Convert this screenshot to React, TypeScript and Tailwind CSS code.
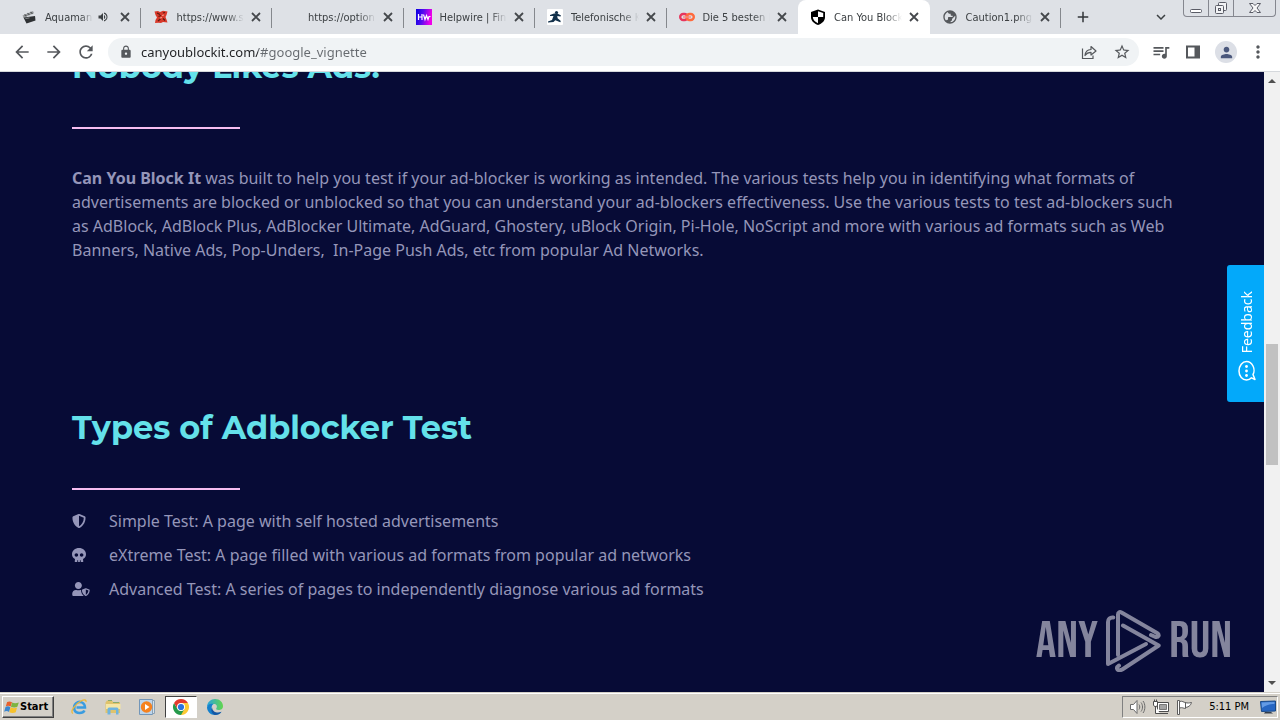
import type { ReactNode } from "react";
import {
  MdArrowBack,
  MdArrowForward,
  MdRefresh,
  MdLock,
  MdStarBorder,
  MdQueueMusic,
  MdPerson,
  MdMoreVert,
  MdAdd,
  MdExpandMore,
  MdPublic,
  MdVolumeUp,
} from "react-icons/md";
import { FaShieldAlt, FaSkull, FaUserShield } from "react-icons/fa";

const ClapperIcon = () => (
  <svg viewBox="0 0 16 16" className="size-4">
    <path d="M1.500 6.500 12 2l1 2.200L2.500 8.700z" fill="#9a9d9f" />
    <path d="m3.500 5.500 2 1.700M6.500 4.200l2 1.700M9.500 3l2 1.700" stroke="#55585a" strokeWidth="1.200" />
    <path d="m2.500 8.400 11.500-1.400.5 4.600-9 3z" fill="#2e3133" />
    <path d="m4.500 9.500 4-.6" stroke="#898c8e" />
  </svg>
);

const RedIcon = () => (
  <svg viewBox="0 0 16 16" className="size-4">
    <path d="M1.500 2.500 5 2l2 1 3-1.200 4.500.7L13.500 6l-1 2 1 2.500 1 3-4.500-.5-2 1-2.500-.2-3.500.2.5-3L4 8.500 2.500 6z" fill="#d8392a" />
    <path d="m4 4 3 1.500M5.500 7.500l2.500-1M10 4l2-.5M5 12l2.500-2M10 9.500l2 2" stroke="#5b1a12" strokeWidth="1.200" />
    <path d="m9 6.500 2-.5M7 9l2-.5" stroke="#f5a08f" />
  </svg>
);

const HelpwireIcon = () => (
  <svg viewBox="0 0 16 16" className="size-4">
    <defs>
      <linearGradient id="hw" x2="1" y2="0.200">
        <stop stopColor="#0800e0" />
        <stop offset="0.500" stopColor="#5a0cf0" />
        <stop offset="1" stopColor="#f000e8" />
      </linearGradient>
    </defs>
    <path fill="url(#hw)" d="M0 0h16v16H0z" />
    <path d="M2.500 5v6M6 5v6M2.500 8H6M7.500 5.500l1.500 5 1.500-4 1.500 4 1-3h1.500" fill="none" stroke="#fff" strokeWidth="1.200" />
  </svg>
);

const RunnerIcon = () => (
  <svg viewBox="0 0 16 16" className="size-4">
    <rect width="16" height="16" rx="1" fill="#fff" />
    <circle cx="9.500" cy="3.500" r="1.600" fill="#12304a" />
    <path d="M3 6 7 4.500h3.500L14 6.500l-.5 1-3.200-.5.300 2.300 3.200 2.700-.5 1.200-5-2L6.500 13 1 13.500v-1.100l4-1.400L6.500 7 3 7z" fill="#12304a" />
  </svg>
);

const LinkedRingsIcon = () => (
  <svg viewBox="0 0 16 16" className="size-4" fill="none" strokeWidth="2.400">
    <rect x="1.200" y="5" width="7.300" height="6" rx="3" stroke="#e8365d" />
    <rect x="7.500" y="5" width="7.300" height="6" rx="3" stroke="#ff6a3d" />
    <path d="M4 8h8" stroke="#f98a80" strokeWidth="1.500" />
  </svg>
);

const QuarteredShieldIcon = () => (
  <svg viewBox="0 0 16 16" className="size-4">
    <path d="M8 .5 15 3v5c0 4-3 6.500-7 8-4-1.500-7-4-7-8V3z" fill="#000" />
    <path d="M8 2.300 13.200 4v4H8zM8 8v6.200C5 12.700 3 11 2.800 8z" fill="#fff" />
  </svg>
);

type Tab = { title: string; icon: ReactNode; audio?: boolean; active?: boolean; divider?: boolean };

const tabs: Tab[] = [
  { title: "Aquaman", icon: <ClapperIcon />, audio: true, divider: true },
  { title: "https://www.s", icon: <RedIcon />, divider: true },
  { title: "https://option", icon: null, divider: true },
  { title: "Helpwire | Fin", icon: <HelpwireIcon />, divider: true },
  { title: "Telefonische K", icon: <RunnerIcon />, divider: true },
  { title: "Die 5 besten L", icon: <LinkedRingsIcon /> },
  { title: "Can You Block", icon: <QuarteredShieldIcon />, active: true },
  { title: "Caution1.png", icon: <MdPublic className="size-[18px] -scale-x-100 text-[#55585c]" />, divider: true },
];

function BrowserTab({ tab }: { tab: Tab }) {
  return (
    <div
      className={
        tab.active
          ? "relative flex min-w-0 flex-1 items-center rounded-t-lg bg-white pl-3 pr-2"
          : "relative flex min-w-0 flex-1 items-center pl-3 pr-2"
      }
    >
      <button className="flex h-full min-w-0 flex-1 items-center gap-2 text-left" type="button">
        <span className="flex size-4 shrink-0 items-center justify-center">{tab.icon}</span>
        <span className="min-w-0 flex-1 overflow-hidden whitespace-nowrap pt-0.5 mask-r-from-75% mask-r-to-100%">
          {tab.title}
        </span>
        {tab.audio && <MdVolumeUp className="-ml-1 mr-1 size-3 shrink-0 text-[#3c4043]" />}
      </button>
      <button type="button" aria-label="Close tab" className="ml-1 flex size-4 shrink-0 items-center justify-center">
        <svg viewBox="0 0 10 10" className="size-[10px]" stroke="#45484c" strokeWidth="1.800">
          <path d="m1 1 8 8M9 1 1 9" />
        </svg>
      </button>
      {tab.divider && <span className="absolute right-0 top-2 h-5 w-px bg-[#85888d]" />}
    </div>
  );
}

function TabStrip() {
  return (
    <div className="flex h-[34px] shrink-0 bg-[#dee1e6] pl-[9px] font-['DejaVu_Sans_Condensed','DejaVu_Sans',sans-serif] text-[11px] text-[#3c4043]">
      <div className="flex min-w-0 max-w-[1052px] flex-1">
        {tabs.map((tab) => (
          <BrowserTab key={tab.title} tab={tab} />
        ))}
      </div>
      <button type="button" aria-label="New tab" className="ml-3 flex w-5 items-center justify-center">
        <MdAdd className="size-[18px] text-[#33363a]" />
      </button>
      <button type="button" aria-label="Search tabs" className="ml-auto mr-3 flex w-5 items-center justify-center">
        <MdExpandMore className="size-[18px] text-[#3c4043]" />
      </button>
      <div className="mr-1 flex h-[17px] rounded-b-[4px] border border-t-0 border-[#85878f]">
        <button type="button" aria-label="Minimize" className="flex w-6 items-center justify-center">
          <svg viewBox="0 0 14 14" className="size-[14px]" fill="#fff" stroke="#5a5c66">
            <rect x="1.500" y="8.500" width="11" height="3" rx="1" />
          </svg>
        </button>
        <button type="button" aria-label="Restore" className="flex w-[26px] items-center justify-center border-x border-[#85878f]">
          <svg viewBox="0 0 14 14" className="size-[14px]" fill="#f2f3f5" stroke="#5a5c66">
            <rect x="4.500" y="1.500" width="8" height="8" rx="1" />
            <rect x="1.500" y="4.500" width="8" height="8" rx="1" />
            <rect x="4.500" y="7.500" width="2" height="2" />
          </svg>
        </button>
        <button type="button" aria-label="Close window" className="flex w-[41px] items-center justify-center">
          <svg viewBox="0 0 14 14" className="size-[14px]" fill="#f7f7f8" stroke="#5a5c66">
            <path d="M1.500 2.500h3.500l2 2 2-2h3.500L9 7l3.500 4.500H9l-2-2-2 2H1.500L5 7z" />
          </svg>
        </button>
      </div>
    </div>
  );
}

function Toolbar() {
  return (
    <div className="flex h-[38px] shrink-0 items-center border-b border-[#d5d8dc] bg-white pb-px text-[#55585c]">
      <button type="button" aria-label="Back" className="ml-3 flex size-5 items-center justify-center">
        <MdArrowBack className="size-5" />
      </button>
      <button type="button" aria-label="Forward" className="ml-3 flex size-5 items-center justify-center">
        <MdArrowForward className="size-5" />
      </button>
      <button type="button" aria-label="Reload" className="ml-3 flex size-5 items-center justify-center">
        <MdRefresh className="size-5" />
      </button>
      <div className="ml-3 flex h-7 min-w-0 flex-1 items-center rounded-full bg-[#f0f3f5] pl-[11px]">
        <MdLock className="size-[14px] shrink-0" />
        <input
          aria-label="Address"
          type="text"
          defaultValue="canyoublockit.com/#google_vignette"
          className="ml-2 min-w-0 flex-1 bg-linear-to-r from-[#202124] from-[117px] to-[#666a6f] to-[117px] bg-clip-text pt-0.5 font-['Noto_Sans',sans-serif] text-[13px] text-transparent outline-none"
        />
        <button type="button" aria-label="Share" className="mr-4 flex size-4 items-center justify-center">
          <svg viewBox="0 0 16 16" className="size-4" fill="none" stroke="currentColor" strokeWidth="1.200">
            <path d="M1.500 4.500v10h10.500v-3" />
            <path d="M4 11.500c.3-3.800 2.500-5.800 6-6V2.500l5 4.500-5 4V8.300c-2.500 0-4.500 1-6 3.200z" strokeLinejoin="round" />
          </svg>
        </button>
        <button type="button" aria-label="Bookmark" className="mr-2 flex size-[18px] items-center justify-center">
          <MdStarBorder className="size-[18px]" />
        </button>
      </div>
      <button type="button" aria-label="Media controls" className="ml-3 flex size-5 items-center justify-center">
        <MdQueueMusic className="size-5" />
      </button>
      <button type="button" aria-label="Side panel" className="ml-3 flex size-5 items-center justify-center">
        <svg viewBox="0 0 16 16" className="size-4">
          <path d="M2 2.500h12v11H2z" fill="none" stroke="currentColor" strokeWidth="2" />
          <path d="M9.500 2H15v12H9.500z" fill="currentColor" />
        </svg>
      </button>
      <button
        type="button"
        aria-label="Profile"
        className="ml-3 flex size-[22px] items-center justify-center rounded-full bg-[#dcdfe6] text-[#4b587c]"
      >
        <MdPerson className="size-[17px]" />
      </button>
      <button type="button" aria-label="Menu" className="ml-[11px] mr-3 flex size-5 items-center justify-center">
        <MdMoreVert className="size-5" />
      </button>
    </div>
  );
}

const tests = [
  { icon: <FaShieldAlt className="size-[14px]" />, text: "Simple Test: A page with self hosted advertisements" },
  { icon: <FaSkull className="size-[14px]" />, text: "eXtreme Test: A page filled with various ad formats from popular ad networks" },
  {
    icon: <FaUserShield className="h-[14px] w-[18px]" />,
    text: "Advanced Test: A series of pages to independently diagnose various ad formats",
  },
];

function SectionHeading({ children }: { children: ReactNode }) {
  return (
    <>
      <h2 className="font-['Montserrat','Inter',sans-serif] text-[32px] font-bold leading-8 text-[#64e1ea]">{children}</h2>
      <hr className="mt-11 h-0.5 w-[168px] border-0 bg-[#f5bdf0]" />
    </>
  );
}

function Watermark() {
  return (
    <div className="absolute bottom-5 right-8 flex items-center gap-2 font-['Bebas_Neue','Oswald','Roboto_Condensed','Roboto',sans-serif] text-[51px] leading-none text-[#84859d]">
      <span>ANY</span>
      <svg
        viewBox="0 0 55 62"
        className="h-[62px] w-[55px]"
        fill="none"
        stroke="currentColor"
        strokeWidth="4"
        strokeLinejoin="round"
        strokeLinecap="round"
      >
        <path d="M7.300 7.500C4 7 2 9 2 12v42l38-20" />
        <path d="M12 45V4.500c0-2 1.500-3 3.500-2L51 23c3 2 1.500 4.500-1.500 4L45 25" />
        <path d="m17 15.500 35.700 20L17 59c-3 2-5.500 1.500-6-.5-.3-1 .5-2 2-3" />
      </svg>
      <span>RUN</span>
    </div>
  );
}

function PageContent() {
  return (
    <main className="relative min-w-0 flex-1 overflow-hidden bg-[#070b36] px-[72px] font-['Noto_Sans',sans-serif] text-base leading-6 text-[#9596b9]">
      <section className="-mt-[21px]">
        <SectionHeading>Nobody Likes Ads!</SectionHeading>
        <p className="mt-[37px] whitespace-pre-wrap">
          <strong className="font-bold">Can You Block It</strong>
          {
            " was built to help you test if your ad-blocker is working as intended. The various tests help you in identifying what formats of advertisements are blocked or unblocked so that you can understand your ad-blockers effectiveness. Use the various tests to test ad-blockers such as AdBlock, AdBlock Plus, AdBlocker Ultimate, AdGuard, Ghostery, uBlock Origin, Pi-Hole, NoScript and more with various ad formats such as Web Banners, Native Ads, Pop-Unders,  In-Page Push Ads, etc from popular Ad Networks."
          }
        </p>
      </section>
      <section className="mt-[150px]">
        <SectionHeading>Types of Adblocker Test</SectionHeading>
        <ul className="mt-[19px] flex flex-col gap-[10px]">
          {tests.map((test) => (
            <li key={test.text} className="flex items-center">
              <span className="w-[37px] shrink-0">{test.icon}</span>
              {test.text}
            </li>
          ))}
        </ul>
      </section>
      <button
        type="button"
        className="absolute right-0 top-[193px] flex h-[137px] w-[37px] flex-col items-center justify-center gap-1.5 rounded-l-[3px] bg-[#03a9fa] pl-0.5 pt-1.5 text-white"
      >
        <span className="rotate-180 text-[14px] leading-5 [writing-mode:vertical-rl]">Feedback</span>
        <svg viewBox="0 0 20 22" className="h-[22px] w-5" fill="none" stroke="currentColor" strokeWidth="1.500" strokeLinejoin="round">
          <path d="M16 14.500c1.300-2 1.300-6 0-8.500C14.500 3 12 1.500 9.500 1.500 5.500 1.500 2 5.500 2 11s3.500 9 7.500 9c2 0 3.800-.8 5-2.200l3.500 1.700z" />
          <g fill="currentColor" stroke="none">
            <circle cx="9.500" cy="6.500" r="1.400" />
            <circle cx="9.500" cy="11" r="1.400" />
            <circle cx="9.500" cy="15.500" r="1.400" />
          </g>
        </svg>
      </button>
      <Watermark />
    </main>
  );
}

function Scrollbar() {
  return (
    <div className="flex w-4 shrink-0 flex-col items-center bg-[#f1f1f1]">
      <svg viewBox="0 0 16 16" className="size-4" fill="#505050">
        <path d="M4 11h8L8 7z" />
      </svg>
      <div className="min-h-0 grow-[256]" />
      <div className="min-h-0 w-3 grow-[121] bg-[#c1c1c1]" />
      <div className="min-h-0 grow-[211]" />
      <svg viewBox="0 0 16 16" className="size-4" fill="#505050">
        <path d="M4 5h8L8 9z" />
      </svg>
    </div>
  );
}

const StartFlag = () => (
  <svg viewBox="0 0 18 16" className="h-4 w-4">
    <path d="M3.500 2.500c2-1.200 3.500-1 5.500.2L7.500 7.500c-2-1.200-3.500-1.200-5.500-.2z" fill="#e8602c" />
    <path d="M9.200 2.800c2 1.200 4.500 1.200 7.500 0L15 7.800c-2.300 1-5 1-7.200-.2z" fill="#7db440" />
    <path d="M1.700 8c2-1 3.500-1 5.500.2l-1.500 5.300c-2-1.200-3.500-1.200-5.500-.2z" fill="#3b86cf" />
    <path d="M7.500 8.400c2.200 1.200 4.500 1.200 7.200.2L13.200 14c-2.300 1-5 1-7.200-.2z" fill="#f6c12c" />
  </svg>
);

const ExplorerIcon = () => (
  <svg viewBox="0 0 18 18" className="size-[18px]" fill="none">
    <path d="M14.500 12.500C13 15.500 6 16.500 4.300 11.500 3 6 8 2.500 12 4.500c2.300 1.200 3 3 3 5H6.500" stroke="#3a9ce0" strokeWidth="2.500" />
    <path d="M3 15.500c-3.500-1.500 2-9.500 8-12.500 3-1.500 5.500-1.500 5 1" stroke="#edb83a" strokeWidth="1.300" />
  </svg>
);

const FolderIcon = () => (
  <svg viewBox="0 0 18 18" className="size-[18px]">
    <path d="M1.500 4.500 3 2.500h5l1 1.500h7v11H1.500z" fill="#dfc36c" />
    <path d="M2 6h14.500v5H2z" fill="#f5e6a5" />
    <path d="M4 2.500h4M9 4.500h6" stroke="#88aa6e" />
    <path d="M3.500 16.500v-5c0-1.500 1-2 2-2h7c1 0 2 .5 2 2v5H12V12H6.500v4.500z" fill="#6fb4df" />
  </svg>
);

const MediaIcon = () => (
  <svg viewBox="0 0 18 18" className="size-[18px]">
    <path d="M1.500 1.500h13v15h-13z" fill="#bcd5ec" stroke="#7296b9" />
    <path d="M14.500 2.500h2v13h-2z" fill="#d7e3ec" stroke="#8ba1b4" />
    <circle cx="8.500" cy="9" r="5.700" fill="#f58220" />
    <path d="m7 6 4.500 3L7 12z" fill="#fff" />
  </svg>
);

const ChromeIcon = () => (
  <svg viewBox="0 0 18 18" className="size-[18px]">
    <path d="M9 9V5h6.930A8 8 0 0 1 9 17z" fill="#fcc934" />
    <path d="M9 9 5.540 11 2.070 5A8 8 0 0 0 9 17l3.460-6z" fill="#259a4b" />
    <path d="M9 5h6.930A8 8 0 0 0 2.070 5l3.470 6z" fill="#e33b2e" />
    <circle cx="9" cy="9" r="4" fill="#fff" />
    <circle cx="9" cy="9" r="3.100" fill="#2b73e0" />
  </svg>
);

const EdgeIcon = () => (
  <svg viewBox="0 0 18 18" className="size-[18px]">
    <defs>
      <linearGradient id="edge-top" x2="1">
        <stop stopColor="#2aa3df" />
        <stop offset="1" stopColor="#62d64c" />
      </linearGradient>
    </defs>
    <path d="M1 9C1 4 5 1 9 1c5 0 8 3.500 8 7 0 3-2 4-4.500 4-2 0-3-.8-2-2 .8-1.200.5-4-2.500-4-3.500 0-6.500 2-7 3z" fill="url(#edge-top)" />
    <path d="M1 9c1-3 4-4 6.500-3C5 7.500 5 12 8 14c2.500 1.700 5.500 1.300 7.500-.2C14 16 11.500 17 9 17c-4.500 0-8-3.500-8-8z" fill="#1580cc" />
    <path d="M6.200 9.500c-.2 3.500 4 6.500 9.300 4.300-1.500 2.200-4 3.200-6.500 3.200-3.500-1-4.500-5-2.800-7.500z" fill="#1457a4" />
  </svg>
);

const launchers = [
  { name: "Internet Explorer", icon: <ExplorerIcon /> },
  { name: "Explorer", icon: <FolderIcon /> },
  { name: "Media Player", icon: <MediaIcon /> },
  { name: "Chrome", icon: <ChromeIcon />, active: true },
  { name: "Edge", icon: <EdgeIcon /> },
];

function Taskbar() {
  return (
    <footer className="flex h-7 shrink-0 items-center border-t border-[#d4d0c8] bg-[#d4d0c8] font-['DejaVu_Sans_Condensed','DejaVu_Sans',sans-serif] text-[11px] text-black shadow-[inset_0_1px_0_#fff]">
      <button
        type="button"
        className="ml-0.5 flex h-[22px] w-[52px] items-center border border-b-[#404040] border-l-white border-r-[#404040] border-t-white pl-px font-bold shadow-[inset_-1px_-1px_0_#808080]"
      >
        <StartFlag />
        <span className="pt-0.5">Start</span>
      </button>
      <nav className="ml-[9px] flex gap-0.5">
        {launchers.map((item) => (
          <button
            key={item.name}
            type="button"
            aria-label={item.name}
            className={
              item.active
                ? "flex h-[22px] w-8 items-center justify-center border border-b-white border-l-[#404040] border-r-white border-t-[#404040] bg-white"
                : "flex h-[22px] w-8 items-center justify-center"
            }
          >
            {item.icon}
          </button>
        ))}
      </nav>
      <div className="ml-auto mr-0.5 flex h-[22px] items-center border border-b-white border-l-[#808080] border-r-white border-t-[#808080] pl-1.5">
        <svg viewBox="0 0 18 16" className="h-4 w-[18px]" fill="#fff" stroke="#6b6b6b">
          <path d="M1.500 5.500h3l3.500-4v13l-3.500-4h-3z" />
          <path d="M10 5.500c1 1.500 1 3.500 0 5M12 3.500c2 2.500 2 6.500 0 9M14 2c2.500 3 2.500 9 0 12" fill="none" />
        </svg>
        <svg viewBox="0 0 18 16" className="ml-1.5 h-4 w-[18px]" fill="#fff" stroke="#4d4d4d">
          <path d="M4.500 3.500h11v9h-11z" />
          <path d="M6.500 5.500h7v5h-7z" fill="#a3a3a3" stroke="#777" />
          <path d="M7 14.500h8M2.500 7v7.500H7M.5 2.500h4V6l-1 1.500h-2L.5 6zM1.500.5v2M3.500.5v2" />
        </svg>
        <svg viewBox="0 0 18 16" className="ml-1.5 h-4 w-[18px]" fill="#fff" stroke="#5c5c5c">
          <path d="M.5 1.500h2v14h-2z" />
          <path d="M2.500 2.500c3-1 4 1 6 1v6c-2 0-3-1.500-6-.5zM8.500 3.500c2 .8 3.500.5 6 0-.5 2-2 4.500-6 5z" />
        </svg>
        <time className="ml-[14px] pt-0.5">5:11 PM</time>
        <svg viewBox="0 0 18 16" className="ml-[10px] h-4 w-[18px]">
          <path d="m1.500 2.500 15-.5v10l-14 .5z" fill="#2766c2" stroke="#194987" />
          <path d="m2.500 3.500 13-.5v2c-5 0-8 1-12.500 4z" fill="#649be5" />
          <path d="M6 13h6l2 1.500H5z" fill="#343e4c" />
        </svg>
      </div>
    </footer>
  );
}

export default function App() {
  return (
    <div className="flex h-screen flex-col overflow-hidden">
      <header>
        <TabStrip />
        <Toolbar />
      </header>
      <div className="flex min-h-0 flex-1">
        <PageContent />
        <Scrollbar />
      </div>
      <Taskbar />
    </div>
  );
}
